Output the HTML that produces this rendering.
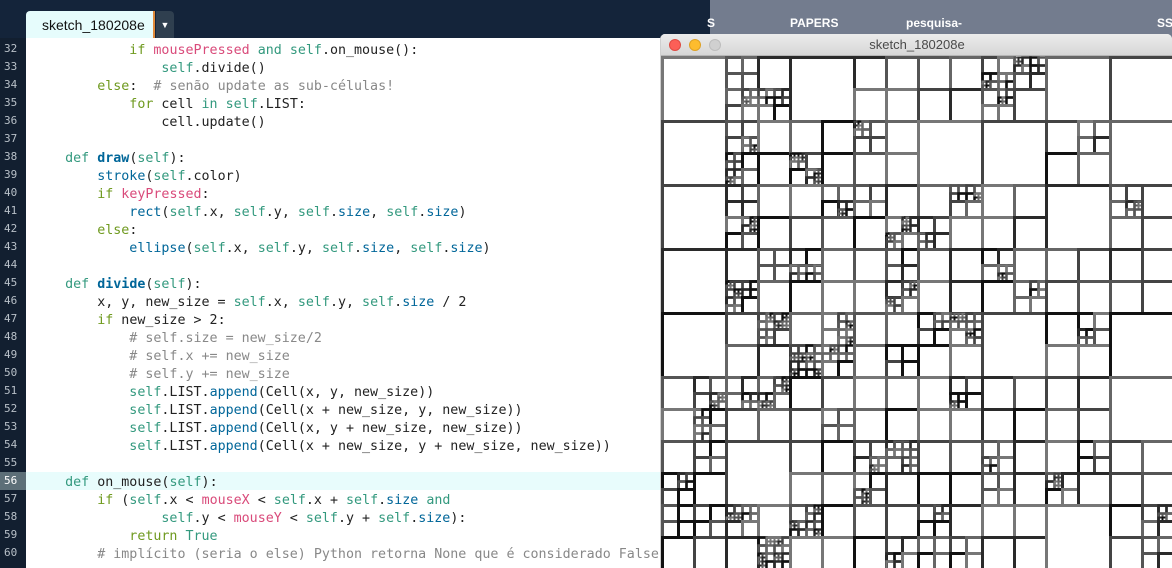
<!DOCTYPE html>
<html><head><meta charset="utf-8">
<style>
*{margin:0;padding:0;box-sizing:border-box}
body{width:1172px;height:568px;overflow:hidden;position:relative;background:#fff;font-family:"Liberation Sans",sans-serif}
#top{position:absolute;left:0;top:0;width:1172px;height:38px;background:#14243a}
#tab{position:absolute;left:26px;top:11px;width:129px;height:27px;background:#e6fcfc;border-radius:4px 0 0 0;border-right:2px solid #e08a3a;font:14px "Liberation Sans",sans-serif;color:#111;padding:6px 0 0 16px}
#dd{position:absolute;left:156px;top:11px;width:18px;height:27px;background:#2f3f4f;border-radius:0 4px 0 0;color:#fff;font-size:9px;text-align:center;padding-top:9px}
#gut{position:absolute;left:0;top:38px;width:26px;height:530px;background:#121f30}
#code{position:absolute;left:26px;top:38px;width:640px;height:530px;background:#fff}
.ln{position:absolute;left:0;width:26px;height:18px;font:11px "DejaVu Sans Mono",monospace;color:#b8c0c8;text-align:left;padding-left:4px;line-height:18px}
.cl{position:absolute;left:33px;height:18px;font:13.33px "DejaVu Sans Mono",monospace;line-height:18px;white-space:pre;color:#222}
.k{color:#6f9a1f}.t{color:#33997e}.p{color:#d94a7a}.c{color:#888}.b{color:#006699}.bb{color:#006699;font-weight:bold}
#hl{position:absolute;left:26px;top:472px;width:640px;height:18px;background:#e8fcfc}
#hlg{position:absolute;left:0;top:472px;width:26px;height:18px;background:#5d6f78}
#desk{position:absolute;left:710px;top:0;width:462px;height:40px;background:#737c8e}
.dl{position:absolute;top:15px;font:bold 12px "Liberation Sans",sans-serif;color:#fff}
#win{position:absolute;left:660px;top:34px;width:512px;height:534px;background:#fff;border-left:1px solid #cfcfcf;border-radius:5px 5px 0 0;overflow:hidden}
#tb{position:absolute;left:0;top:0;width:512px;height:22px;background:linear-gradient(#ececec,#d6d6d6);border-bottom:1px solid #b5b5b5;text-align:center;font:13px "Liberation Sans",sans-serif;color:#4a4a4a;line-height:22px}
.dot{position:absolute;top:5px;width:12px;height:12px;border-radius:50%}
svg{position:absolute;left:0;top:22px}
</style></head><body>
<div id="top"></div>
<div id="tab">sketch_180208e</div>
<div id="dd">▼</div>
<div id="gut"></div>
<div id="code"></div>
<div id="hlg"></div>
<div id="hl"></div>
<div id="lines"></div>
<div id="desk">
<div class="dl" style="left:-3px;top:16px">S</div>
<div class="dl" style="left:80px;top:16px">PAPERS</div>
<div class="dl" style="left:196px;top:16px">pesquisa-</div>
<div class="dl" style="left:447px;top:16px">SS</div>
</div>
<div id="win"><div id="tb">sketch_180208e</div>
<div class="dot" style="left:8px;background:#fc5f57;border:1px solid #de4a42"></div>
<div class="dot" style="left:28px;background:#fdbc2e;border:1px solid #dea123"></div>
<div class="dot" style="left:48px;background:#d0d0d0;border:1px solid #bdbdbd"></div>
<svg id="g" width="512" height="512" viewBox="0 0 512 512"></svg>
</div>
<script>
var L=[
'            <span class="k">if</span> <span class="p">mousePressed</span> <span class="t">and</span> <span class="t">self</span>.on_mouse():',
'                <span class="t">self</span>.divide()',
'        <span class="k">else</span>:  <span class="c"># senão update as sub-células!</span>',
'            <span class="k">for</span> cell <span class="t">in</span> <span class="t">self</span>.LIST:',
'                cell.update()',
'',
'    <span class="t">def</span> <span class="bb">draw</span>(<span class="t">self</span>):',
'        <span class="b">stroke</span>(<span class="t">self</span>.color)',
'        <span class="k">if</span> <span class="p">keyPressed</span>:',
'            <span class="b">rect</span>(<span class="t">self</span>.x, <span class="t">self</span>.y, <span class="t">self</span>.<span class="b">size</span>, <span class="t">self</span>.<span class="b">size</span>)',
'        <span class="k">else</span>:',
'            <span class="b">ellipse</span>(<span class="t">self</span>.x, <span class="t">self</span>.y, <span class="t">self</span>.<span class="b">size</span>, <span class="t">self</span>.<span class="b">size</span>)',
'',
'    <span class="t">def</span> <span class="bb">divide</span>(<span class="t">self</span>):',
'        x, y, new_size = <span class="t">self</span>.x, <span class="t">self</span>.y, <span class="t">self</span>.<span class="b">size</span> / 2',
'        <span class="k">if</span> new_size &gt; 2:',
'            <span class="c"># self.size = new_size/2</span>',
'            <span class="c"># self.x += new_size</span>',
'            <span class="c"># self.y += new_size</span>',
'            <span class="t">self</span>.LIST.<span class="b">append</span>(Cell(x, y, new_size))',
'            <span class="t">self</span>.LIST.<span class="b">append</span>(Cell(x + new_size, y, new_size))',
'            <span class="t">self</span>.LIST.<span class="b">append</span>(Cell(x, y + new_size, new_size))',
'            <span class="t">self</span>.LIST.<span class="b">append</span>(Cell(x + new_size, y + new_size, new_size))',
'',
'    <span class="t">def</span> on_mouse(<span class="t">self</span>):',
'        <span class="k">if</span> (<span class="t">self</span>.x &lt; <span class="p">mouseX</span> &lt; <span class="t">self</span>.x + <span class="t">self</span>.<span class="b">size</span> <span class="t">and</span>',
'                <span class="t">self</span>.y &lt; <span class="p">mouseY</span> &lt; <span class="t">self</span>.y + <span class="t">self</span>.<span class="b">size</span>):',
'            <span class="k">return</span> <span class="t">True</span>',
'        <span class="c"># implícito (seria o else) Python retorna None que é considerado False</span>'
];
var h='';
for(var i=0;i<L.length;i++){var y=40+i*18;
h+='<div class="ln" style="top:'+y+'px'+(i==24?';color:#fff':'')+'">'+(32+i)+'</div><div class="cl" style="top:'+(y+2)+'px">'+L[i]+'</div>';}
document.getElementById('lines').innerHTML=h;
var seed=7;function r(){seed=(seed*16807)%2147483647;return seed/2147483647;}
var M=["03012200","03320020","03332202","03331211","03322020","23232210","30231221","23322102"];
var cols=["#111","#2a2a2a","#444","#555","#666","#777"];
var s='';
function rect(x,y,z){var w=z>=16?3:(z>=8?2.5:2);s+='<rect x="'+(x+1.5)+'" y="'+(y+1.5)+'" width="'+z+'" height="'+z+'" fill="none" stroke="'+cols[Math.floor(r()*6)]+'" stroke-width="'+w+'"/>';}
function cell(x,y,z,lv){
 var p=0;
 if(z==64)p=lv>0?1:0;
 else if(z==32)p=lv==3?0.6:(lv==2?0.4:0);
 else if(z==16)p=lv==3?0.3:(lv==2?0.15:0);
 else if(z==8)p=lv==3?0.25:0.1;
 if(z>4&&r()<p){var hz=z/2;cell(x,y,hz,lv);cell(x+hz,y,hz,lv);cell(x,y+hz,hz,lv);cell(x+hz,y+hz,hz,lv);}
 else rect(x,y,z);
}
for(var j=0;j<8;j++)for(var i=0;i<8;i++)cell(i*64,j*64,64,+M[j][i]);
document.getElementById('g').innerHTML=s;
</script>
</body></html>
